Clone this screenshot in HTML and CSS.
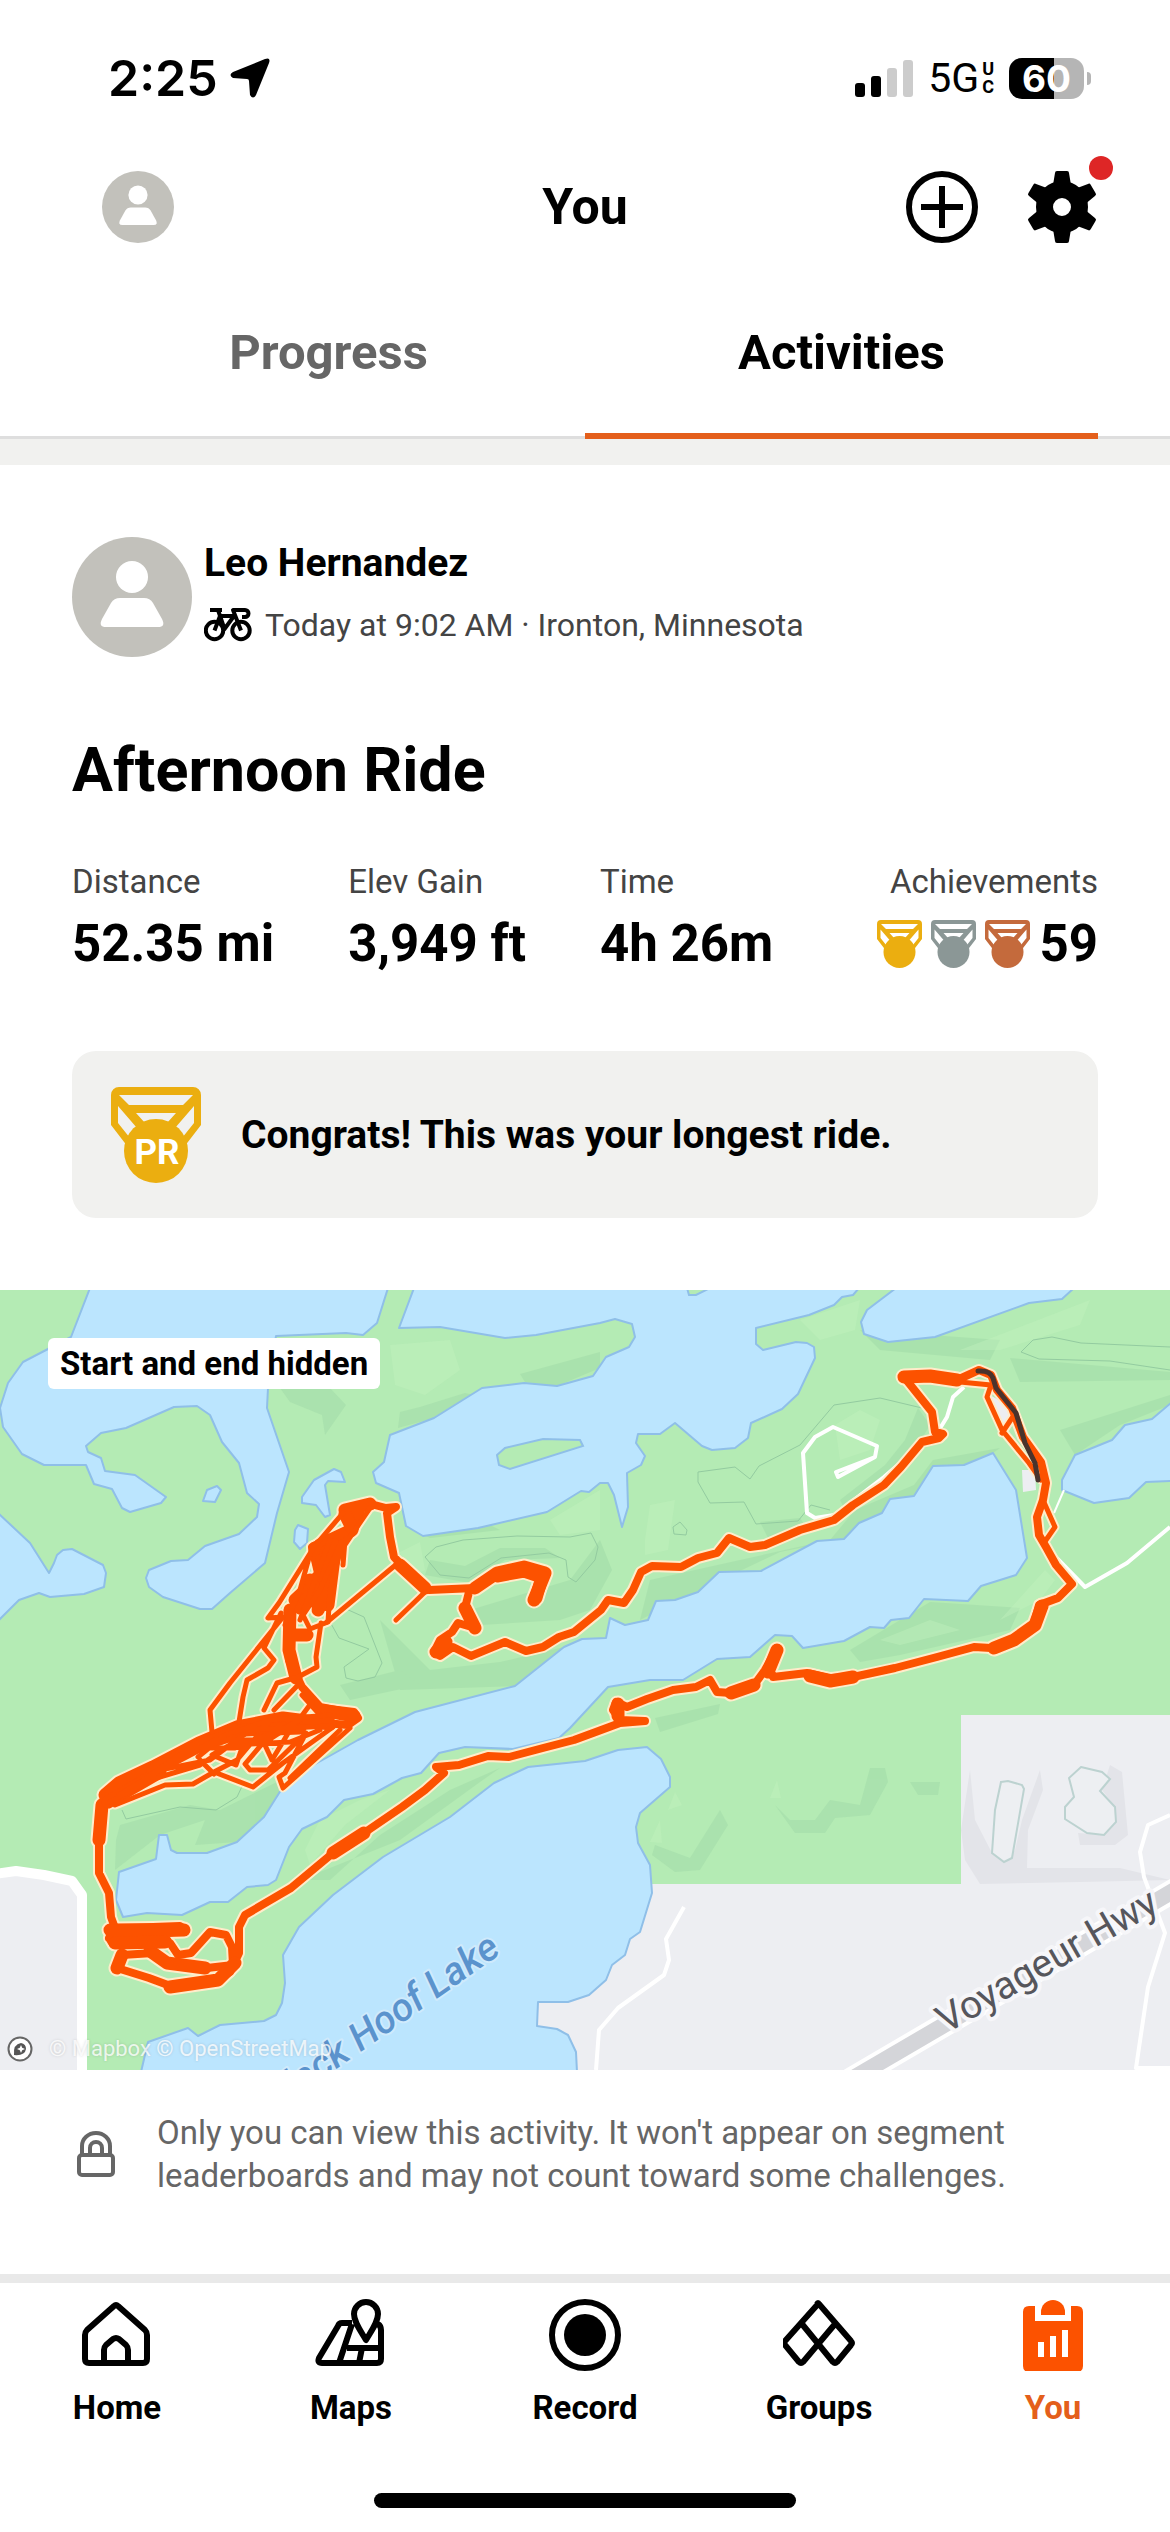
FILE: index.html
```html
<!DOCTYPE html>
<html lang="en">
<head>
  <meta charset="UTF-8" />
  <meta name="viewport" content="width=device-width, initial-scale=1.0"/>
  <title>You | Activities</title>
  <link rel="stylesheet" href="styles.css">
</head>
<body>

  <div class="status-bar">
    <div class="status-time">
      <span>2:25</span>
      <svg width="40" height="40" viewBox="0 0 40 40"><path d="M35 1Q41-1 39 5L26 37Q23 42 20 37L19 23Q19 21 17 21L3 20Q-2 17 3 14Z" /></svg>
    </div>
    <div class="status-icons">
      <svg class="signal" width="58" height="37" viewBox="0 0 58 37">
        <rect x="0" y="23" width="10" height="14" rx="3" />
        <rect x="16" y="16" width="10" height="21" rx="3" />
        <rect class="off" x="32" y="8" width="10" height="29" rx="3" />
        <rect class="off" x="48" y="0" width="10" height="37" rx="3" />
      </svg>
      <div class="network">5G<span class="network-type"><span>U</span><span>C</span></span></div>
      <div class="battery">60</div>
    </div>
  </div>

  <header class="header">
    <a href="#profile" class="header-avatar" aria-label="Profile">
      <svg width="72" height="72" viewBox="0 0 120 120"><circle class="avatar-bg" cx="60" cy="60" r="60" /><circle class="avatar-fg" cx="60" cy="40" r="16" /><path class="avatar-fg" d="M48 61h24q6 0 9 5l9 16q4 8-4 8H34q-8 0-4-8l9-16q3-5 9-5z" /></svg>
    </a>
    <h1>You</h1>
    <div class="header-actions">
      <button aria-label="Add">
        <svg width="72" height="72" viewBox="0 0 72 72"><circle cx="36" cy="36" r="33" fill="none" stroke="#000" stroke-width="6" /><path d="M15 36H57M36 15V57" stroke="#000" stroke-width="6" /></svg>
      </button>
      <button class="settings" aria-label="Settings">
        <svg width="72" height="72" viewBox="-36 -36 72 72">
          <defs><path id="tooth" d="M-5-36H5Q7-36 7-34L9-22H-9L-7-34Q-7-36-5-36Z" /></defs>
          <circle r="17.500" fill="none" stroke="#000" stroke-width="17" />
          <use href="#tooth" />
          <use href="#tooth" transform="rotate(60)" />
          <use href="#tooth" transform="rotate(120)" />
          <use href="#tooth" transform="rotate(180)" />
          <use href="#tooth" transform="rotate(240)" />
          <use href="#tooth" transform="rotate(300)" />
        </svg>
        <span class="dot"></span>
      </button>
    </div>
  </header>

  <nav class="tabs">
    <a href="#progress">Progress</a>
    <a href="#activities" class="active">Activities</a>
  </nav>

  <main>
    <div class="activity">
      <div class="athlete">
        <svg width="120" height="120" viewBox="0 0 120 120"><circle class="avatar-bg" cx="60" cy="60" r="60" /><circle class="avatar-fg" cx="60" cy="40" r="16" /><path class="avatar-fg" d="M48 61h24q6 0 9 5l9 16q4 8-4 8H34q-8 0-4-8l9-16q3-5 9-5z" /></svg>
        <div>
          <div class="name">Leo Hernandez</div>
          <div class="meta">
            <svg width="48" height="34" viewBox="0 0 48 34" fill="none" stroke="#000" stroke-width="4" stroke-linejoin="round"><circle cx="10.500" cy="22.500" r="8.700" /><circle cx="37" cy="22.500" r="8.700" /><path d="M6 2H18M14 2l6.500 19L30 8H16L10.500 22.500M37 22.500 29 2H41a3.500 3.500 0 0 1 0 7h-3" /></svg>
            <span>Today at 9:02 AM · Ironton, Minnesota</span>
          </div>
        </div>
      </div>

      <h2>Afternoon Ride</h2>

      <div class="stats">
        <div>
          <div class="stat-label">Distance</div>
          <div class="stat-value">52.35 mi</div>
        </div>
        <div>
          <div class="stat-label">Elev Gain</div>
          <div class="stat-value">3,949 ft</div>
        </div>
        <div>
          <div class="stat-label">Time</div>
          <div class="stat-value">4h 26m</div>
        </div>
        <div class="achievements">
          <div class="stat-label">Achievements</div>
          <div class="stat-value">
            <svg class="gold" width="45" height="48" viewBox="0 0 90 96"><use href="#medal" /></svg>
            <svg class="silver" width="45" height="48" viewBox="0 0 90 96"><use href="#medal" /></svg>
            <svg class="bronze" width="45" height="48" viewBox="0 0 90 96"><use href="#medal" /></svg>
            <span>59</span>
          </div>
        </div>
      </div>

      <div class="congrats">
        <svg class="gold" width="90" height="96" viewBox="0 0 90 96">
          <defs>
            <g id="medal">
              <path fill-rule="evenodd" d="M8 0H82a8 8 0 0 1 8 8V38L70 64H20L0 38V8a8 8 0 0 1 8-8ZM8 8 18 18H72L82 8ZM25 26 34 36H56L65 26ZM7 19 26 41 19 51 7 36ZM83 19 64 41 71 51 83 36Z" />
              <circle cx="45" cy="64" r="32" />
            </g>
          </defs>
          <use href="#medal" />
          <text class="pr" x="46" y="77">PR</text>
        </svg>
        <p>Congrats! This was your longest ride.</p>
      </div>
    </div>

    <div class="map">
      <svg class="map-canvas" viewBox="0 0 1170 780" preserveAspectRatio="xMidYMid slice">
        <rect class="land" width="1170" height="780" />

        <!-- hill shading -->
        <g class="shade">
          <path d="M400 122 420 117 465 103 478 106 434 128 398 138ZM520 84 600 62 600 78 557 96 525 92ZM280 98 330 98 346 115 325 145 322 125 290 112ZM390 150 400 205 420 240 470 225 500 240 430 248 405 236 399 203 378 192Z" />
          <path d="M425 285 470 293 505 270 560 268 545 258 500 258 465 276 430 270ZM570 290 600 250 612 280 590 320 560 330 480 335 470 320ZM380 330 400 400 515 396 564 357 500 372 430 380Z" />
          <path d="M120 535 190 515 220 520 281 490 281 500 264 527 237 552 195 555 205 530 160 545 115 580 116 550ZM340 395 400 380 420 395 350 410Z" />
          <path d="M1010 68 1170 82 1170 90 1020 92ZM918 118 930 135 915 160 880 190 845 220 840 210 885 175 905 150ZM855 220 914 195 933 170 1000 158 993 163 964 175 933 176 914 206 882 223 844 249 780 262 700 300 640 330 650 290 740 270 830 250Z" />
          <path d="M760 232 800 228 808 240 770 252ZM930 312 1020 318 1010 340 900 365 860 372 850 360ZM1060 140 1170 105 1170 115 1120 135 1075 165ZM860 40 1000 50 990 70 880 60Z" />
          <path d="M655 555 690 568 720 520 728 535 700 580 675 582 652 565ZM775 515 790 530 815 530 830 510 860 515 870 478 885 478 888 492 870 525 835 528 825 543 795 543ZM910 492 940 492 938 505 918 505ZM655 428 720 414 718 424 660 442ZM300 590 330 590 380 545 450 500 500 478 480 492 400 550Z" />
        </g>
        <g class="light">
          <path d="M390 55 450 50 460 80 425 105 395 95ZM400 262 420 252 425 280 405 290ZM550 230 600 200 600 240 560 245ZM645 250 650 215 675 210 668 260 645 265ZM835 135 860 120 880 130 870 160 840 170ZM960 60 1090 10 1080 35 1000 60ZM800 30 860 10 855 40 820 50Z" />
          <path d="M305 560 320 530 360 510 390 500 345 535 310 575ZM1000 330 1045 280 1055 290 1040 310ZM880 350 930 330 960 340 900 355ZM668 520 675 502 682 515ZM650 552 660 530 662 553ZM770 508 777 490 781 508Z" />
        </g>

        <!-- town blocks -->
        <path class="block" d="M640 594H961V425H1170V780H530V690Z" />
        <path class="block" d="M0 583 16 581 75 592 82 603V780H0Z" />
        <path class="block" d="M990 105 1012 118 1015 132 1002 142ZM1022 180 1035 180 1036 200 1023 202Z" />
        <path class="block-shade" d="M961 540 970 480 975 530 992 563 1004 572 1015 560 1022 530 1040 480 1043 500 1028 540 1027 578 1120 578 1170 590 1080 592 980 594 965 570ZM1110 475 1122 482 1128 545 1115 555 1080 555 1078 543 1104 545 1116 532 1115 517 1102 500Z" />

        <!-- lakes -->
        <g class="water">
          <path d="M90-2 71 47 23 72 8 93 0 118 3 137 22 164 44 175H86L94 194 112 199 122 218 130 222 161 213 166 207 135 185 105 181 101 168 88 162 86 156 101 143 126 138 174 117 197 116 210 125 222 152 239 173 247 203 259 214 257 227 239 244 205 256 188 270 171 271 149 280 146 288 149 297 163 307 200 319 212 319 230 303 265 273 277 223 289 182 267 118 268 98 276 46 346 43 363 45 377 33 388-2Z" />
          <path d="M-2 223 30 253 49 283 54 273 57 265 63 260 72 259 103 275 106 283 104 297 84 304 50 307 39 303 19 310-2 331Z" />
          <path d="M203 211 207 200 217 196 221 200 215 212ZM302 207 314 190 334 179 341 182 345 192 328 191 325 195 330 225 325 227 316 215 302 213ZM298 235 308 239 307 253 300 259 294 252 295 240Z" />
          <path d="M414-2 399 38 440 37 505 48 536 45 600 33 615 29 632 34 635 47 629 57 606 67 593 86 557 96 524 93 482 98 434 128 390 145 384 172 373 182 376 193 399 203 406 236 423 246 478 238 547 222 581 201 589 202 600 193 608 193 614 205 622 237 628 217 627 183 641 175 645 166 636 153 638 144 660 144 675 133 702 156 712 160 735 158 748 148 751 133 782 119 798 104 815 68 814 57 807 53 796 52 763 60 756 54V38L809 25 834 15 842 7 853 5 859-2Z" />
          <path d="M896-2 867 20 861 32 864 44 888 52 935 47 1029 13 1062 9 1074-2ZM1172 112 1152 129 1125 135 1112 150 1075 165 1062 190V200L1094 213 1129 208 1146 192 1172 191Z" />
          <path d="M993 163 1016 200 1027 268 1016 285 981 296 968 311 924 309 909 328 891 330 884 338 870 337 844 351 803 358 792 346 775 345 750 367 717 369 683 390H650L608 397 570 438 559 448 513 459 465 457 439 463 421 483 402 488 373 504 344 510 327 527 302 539 289 557 276 590 268 595 247 597 228 612H210L182 625 147 623 123 627 116 610 119 582 156 569 159 545H167L171 560 177 563H207L237 552 264 527 281 500 310 477 358 450 415 422 515 396 564 357 582 349 606 348 610 328 625 335 648 330 656 311 675 310 698 302 719 282 761 281 817 251 844 249 859 233 882 223 890 209 914 206 933 176 964 175Z" />
          <path d="M585 471 618 460 647 457 661 469 670 487V497L640 523 636 537 638 553 650 575 652 603 640 642 630 649 625 665 612 675 606 690 589 705 568 712H538L537 736 557 739 568 745 576 762 577 782H141L148 752 188 738 198 746 220 735 264 731 276 725 282 713 285 693 283 665 299 637 333 605 383 567 450 527 494 493 528 477Z" />
        </g>
        <g class="island">
          <path d="M497 165 505 158 543 149 580 150 583 156 510 179 499 175ZM687-2 689 5 696 5 710-2Z" />
        </g>

        <!-- contours -->
        <g class="contour">
          <path d="M425 267 436 257 463 250 517 246 570 247 591 243 598 257 595 270 576 292 568 287 566 270 549 263 501 268 469 288 440 285Z" />
          <path d="M922 118 880 108 834 115 800 155 759 176 750 189 735 177 698 182V192L710 213 744 212 756 234 798 231 811 215 830 220" />
          <path d="M1170 57 1081 53 1052 47 1033 50 1021 62 1039 69 1110 71 1170 80" />
          <path d="M329 330 339 348 369 359 344 377 346 388 358 391 375 387 382 373 364 327 344 318" />
          <path d="M122 520 126 529 180 517 216 520 237 507 245 490M673 237 680 232 687 240 686 245 674 244Z" />
        </g>
        <g class="pit">
          <path d="M1001 492 1008 491 1022 495 1024 499 1012 568 1004 572 992 563 995 520ZM1081 477 1102 482 1110 489 1100 501 1115 517 1116 532 1104 545 1087 543 1065 529V517L1074 507 1069 488Z" />
        </g>

        <!-- roads -->
        <g class="road">
          <path class="road-wide" d="M-5 584 16 581 44 585 72 591 82 605V785" />
          <path d="M684 617 666 649 669 670 664 685 618 718 599 740 596 780M1170 525 1148 535 1140 562 1144 587 1165 643 1148 697 1136 778H1170" />
          <path d="M964 97 953 107 947 127 939 140M922 154 884 187 834 225 815 228 807 223 803 163 815 147 833 137 877 156 875 167 838 187 836 182 875 167M1046 257 1085 297 1127 273 1170 237" />
          <path class="road-thin" d="M1064 200 1054 223" />
        </g>
        <path class="highway-case" d="M850 790 1180 597" />
        <path class="highway" d="M850 790 1180 597" />

        <!-- the ride itself, drawn once as a halo and once in orange -->
        <defs>
          <g id="route">
            <path class="line" d="M475 338 458 333 452 342 440 350 434 362 440 366 453 357 471 366 505 352 526 361 543 357 559 347 574 342 601 320 608 310 624 313 633 300 641 282 652 276 681 277 698 268 717 263 729 248 750 257 765 255 800 240 834 230 853 215 884 195 901 177 922 152 939 148 943 144 935 142 932 122 916 102 904 87 930 85 957 90 979 80 991 85 997 100 1012 118 1023 147 1041 172 1046 193 1043 210 1037 227 1039 245 1046 257 1056 275 1072 294 1058 308 1039 315 1033 337 1014 350 991 358 974 357 937 367 895 378 853 387 830 388 807 383 773 387 769 377 777 358 765 380 754 395 731 403 717 402 710 390 696 397 673 400 647 409 627 417 616 412 613 420 620 430 645 431 620 433 593 443 574 450 543 458 509 467 488 466 459 475 436 477 444 483 425 500 402 517 364 543 333 563 291 598 245 625 239 637V663L230 682 218 690 176 698 149 688 117 678 122 665 153 663 165 673 207 678 233 675 232 657 226 645 210 642 201 652 191 663 178 665 170 653 130 653 109 648 153 645 186 640 180 636 153 637 115 638 111 627 109 603 99 583V550L101 513 119 493 153 477 199 453 237 435 283 427 325 433 348 435 358 428 354 422 321 418 302 397 289 370 287 343 295 310 318 283 312 257 329 248 352 243 360 223 344 220 367 213 386 218 396 217 387 223 390 247 394 267 409 283 429 300 475 298 469 302 465 318 475 338" />
            <path class="line-thick" d="M475 298 497 283 524 277 545 283 534 310M400 275 425 298M475 338 465 318M436 362 446 352M904 87 930 86 957 90M1042 316 1035 335 1014 350 994 358M777 360 768 382M810 386 830 391 853 387M754 395 731 403M618 414V426M105 505 119 493 153 477 199 453 237 437 283 428 330 434M354 426 322 420M345 220 370 214M320 255 352 240 356 224M307 345 290 345M290 320 289 360 296 388M295 310 322 285 315 258M99 550 102 515M113 650 165 651M110 640 150 640M117 678 122 665M170 697 218 690 235 673M150 661 167 673 205 678M333 563 364 543M184 640 150 641" />
            <path class="line-thick" d="M497 286 524 281 542 287 536 308M326 262 332 280 322 312M334 268 328 315M308 300 300 318M115 653 165 652M345 224 352 238M153 480 199 456 245 440 300 438M108 512 160 482" />
            <path class="line-thick" d="M322 270 328 300 318 320M305 310 322 312 310 290M325 282 334 255" />
            <path class="line-thin" d="M425 302 396 330M398 273 327 332M960 92 991 95 987 107 1002 140 1029 173 1041 190M1012 128 1002 143M1043 210 1055 237 1046 250" />
            <path class="line-thin" d="M343 223 314 257 279 313 268 328 283 327 230 393 210 420 212 442M281 323 264 358 274 370 268 378 247 390 243 407 239 432M321 333 316 367 317 377 298 387 277 393 264 420M298 395 274 420M370 218 340 262 330 300 328 332 310 339 303 325 320 300 341 252M312 257 300 300 285 335M330 250 300 330M302 405 320 425M312 412 295 435M345 250 343 275" />
            <path class="line-thin" d="M115 515 165 495 193 494 214 482 253 497 283 473 333 437M350 438 283 498 279 487 285 483 306 443 268 480 250 480 245 474 268 447M340 440 290 488M272 470 264 453 295 433M214 482 237 470 268 433M272 470 290 440M119 505 160 480 210 470 250 440 330 436M110 512 150 490 200 475 230 455 290 452 320 440M150 485 190 458 235 458 280 440M170 475 215 450 260 450 300 430M200 470 214 484M198 467 225 445 270 430 330 425M230 455 212 465 236 475 243 455" />
          </g>
        </defs>
        <use href="#route" class="route-halo" />
        <use href="#route" class="route" />
        <path class="route-now" d="M978 81Q990 80 993 88L996 98 1016 123 1025 153 1035 173 1038 190" />

        <text class="lake-name" transform="translate(502 663) rotate(-35)">Black Hoof Lake</text>
        <text class="road-name" transform="translate(946 744) rotate(-30)">Voyageur Hwy</text>
      </svg>
      <div class="map-badge">Start and end hidden</div>
      <div class="map-credit">
        <svg width="26" height="26" viewBox="0 0 26 26"><circle cx="13" cy="13" r="11.500" fill="#fff" stroke="#666" stroke-width="2" /><path d="M7 19Q6 8 14 7a6 6 0 0 1 5 6Q18 20 7 19Z" fill="#555" /><path d="m14 9 1.200 2.800L18 13l-2.800 1.200L14 17l-1.200-2.800L10 13l2.800-1.200Z" fill="#fff" /></svg>
        <span>© Mapbox © OpenStreetMap</span>
      </div>
    </div>

    <div class="privacy">
      <svg width="38" height="46" viewBox="0 0 38 46" fill="none" stroke="#666" stroke-width="4"><rect x="2" y="24" width="34" height="20" rx="3" /><path d="M5 24V15a14 13 0 0 1 28 0v9M13 24v-7a6 6 0 0 1 12 0v7" /></svg>
      <p>Only you can view this activity. It won't appear on segment leaderboards and may not count toward some challenges.</p>
    </div>
  </main>

  <nav class="tab-bar">
    <a href="#home">
      <svg width="72" height="72" viewBox="0 0 72 72"><path d="M33 7q2-2 4 0L64 31q2 2 2 5V60q0 4-4 4H8q-4 0-4-4V36q0-3 2-5ZM23 64V51q0-3 2-5l7-6q3-2 6 0l7 6q2 2 2 5v13" /></svg>
      <span>Home</span>
    </a>
    <a href="#maps">
      <svg width="72" height="72" viewBox="0 0 72 72"><path d="M37 24H27q-3 0-4 3L4 59q-2 5 3 5H62q4 0 4-4V31q0-4-3-6M37 25 24 64M32 49H66M47 49 44 64M51 41C45 31 39 23 39 15a12 12 0 0 1 24 0c0 8-6 16-12 26z" /></svg>
      <span>Maps</span>
    </a>
    <a href="#record">
      <svg width="72" height="72" viewBox="0 0 72 72"><circle cx="36" cy="36" r="33" /><circle class="solid" cx="36" cy="36" r="21" /></svg>
      <span>Record</span>
    </a>
    <a href="#groups">
      <svg width="72" height="72" viewBox="0 0 72 72"><path d="M34 5q1-2 2 0L68 42q2 2 0 4L54 63q-2 2-4 0L19 25M35 5 2 42q-2 2 0 4L16 63q2 2 4 0L52 25" /></svg>
      <span>Groups</span>
    </a>
    <a href="#you" class="active">
      <svg width="72" height="72" viewBox="0 0 72 72"><path class="solid" fill-rule="evenodd" d="M12 7H18V22H54V7H60q6 0 6 6V67q0 6-6 6H12q-6 0-6-6V13q0-6 6-6ZM21 43V58H27V43ZM33 37V58H39V37ZM45 31V58H51V31Z" /><path class="solid" d="M24 16V13a12 12 0 0 1 24 0v3Z" /></svg>
      <span>You</span>
    </a>
  </nav>
  <div class="home-indicator"></div>

</body>
</html>
```
FILE: styles.css
```css
* {
  box-sizing: border-box;
}

body {
  margin: 0;
  background-color: #fff;
  color: #000;
  font-family: Roboto, "Liberation Sans", sans-serif;
}

svg {
  display: block;
  flex-shrink: 0;
}

a {
  color: inherit;
  text-decoration: none;
}

h1, h2, p {
  margin: 0;
}

button {
  padding: 0;
  border: none;
  background: none;
  cursor: pointer;
}

/* Status bar */
.status-bar {
  display: flex;
  justify-content: space-between;
  align-items: center;
  height: 156px;
  padding: 0 86px 0 108px;
  font-family: Inter, sans-serif;
}

.status-time {
  display: flex;
  align-items: center;
  gap: 12px;
  font-size: 50px;
  font-weight: 600;
}

.status-icons {
  display: flex;
  align-items: center;
  gap: 15px;
}

.signal .off {
  fill: #ccc;
}

.network {
  display: flex;
  align-items: center;
  gap: 3px;
  font-family: Roboto, sans-serif;
  font-size: 41px;
  font-weight: 400;
}

.network-type {
  display: flex;
  flex-direction: column;
  font-size: 18px;
  font-weight: 700;
  line-height: 18px;
}

.battery {
  position: relative;
  width: 75px;
  height: 41px;
  border-radius: 13px;
  background: linear-gradient(to right, #000 60%, #b5b5b5 60%);
  color: #fff;
  font-size: 37px;
  font-weight: 700;
  line-height: 41px;
  text-align: center;
}

.battery::after {
  content: "";
  position: absolute;
  top: 14px;
  right: -7px;
  width: 4px;
  height: 13px;
  border-radius: 0 4px 4px 0;
  background-color: #b5b5b5;
}

/* Header */
.header {
  display: grid;
  grid-template-columns: 1fr auto 1fr;
  align-items: center;
  height: 102px;
  padding: 0 72px 0 102px;
}

.header h1 {
  padding-right: 30px;
  font-size: 50px;
  font-weight: 700;
}

.header-actions {
  display: flex;
  justify-content: flex-end;
  gap: 48px;
}

.settings {
  position: relative;
}

.dot {
  position: absolute;
  top: -15px;
  right: -15px;
  width: 24px;
  height: 24px;
  border-radius: 50%;
  background-color: #de2626;
}

.avatar-bg {
  fill: #c2c1bb;
}

.avatar-fg {
  fill: #fff;
}

/* Tabs */
.tabs {
  display: flex;
  padding: 0 72px;
  border-bottom: 26px solid #f1f1ef;
  background: linear-gradient(to top, #dedede 3px, #fff 3px);
}

.tabs a {
  flex: 1;
  height: 181px;
  border-bottom: 6px solid transparent;
  color: #666;
  font-size: 49px;
  font-weight: 700;
  line-height: 189px;
  text-align: center;
}

.tabs .active {
  border-color: #e45f1b;
  color: #000;
}

/* Activity */
.activity {
  padding: 72px;
}

.athlete {
  display: flex;
  gap: 12px;
}

.name {
  padding-top: 3px;
  font-size: 39px;
  font-weight: 700;
  line-height: 46px;
}

.meta {
  display: flex;
  align-items: center;
  gap: 13px;
  margin-top: 16px;
  color: #444;
  font-size: 32px;
  line-height: 46px;
}

h2 {
  margin-top: 77px;
  font-size: 61px;
  font-weight: 700;
  line-height: 72px;
}

.stats {
  display: flex;
  gap: 74px;
  margin-top: 56px;
}

.stat-label {
  color: #444;
  font-size: 33px;
  line-height: 40px;
}

.stat-value {
  display: flex;
  gap: 9px;
  align-items: center;
  margin-top: 12px;
  font-size: 51px;
  font-weight: 700;
  line-height: 60px;
}

.achievements {
  margin-left: auto;
  text-align: right;
}

.gold {
  fill: #ebae10;
}

.silver {
  fill: #8b9796;
}

.bronze {
  fill: #c46a3c;
}

.congrats {
  display: flex;
  align-items: center;
  gap: 40px;
  margin-top: 77px;
  height: 167px;
  padding: 0 39px;
  border-radius: 24px;
  background-color: #f1f1ef;
  font-size: 39px;
  font-weight: 700;
}

.pr {
  fill: #fff;
  font-size: 35px;
  text-anchor: middle;
}

/* Map */
.map {
  position: relative;
}

.map-canvas {
  width: 100%;
}

.land {
  fill: #b4ebb4;
}

.shade {
  fill: #9bd5a4;
  opacity: 0.4;
}

.light {
  fill: #c4f3bf;
  opacity: 0.4;
}

.block {
  fill: #edeef2;
}

.block-shade {
  fill: #e3e4e9;
}

.water {
  fill: #bbe5fe;
  stroke: #8fbfe8;
  stroke-width: 2;
  stroke-linejoin: round;
}

.island {
  fill: #b4ebb4;
  stroke: #8fbfe8;
  stroke-width: 2;
}

.contour {
  fill: none;
  stroke: #93cba0;
  stroke-width: 1;
}

.pit {
  fill: #edeff2;
  stroke: #bcd2d0;
  stroke-width: 2;
}

.road {
  fill: none;
  stroke: #fff;
  stroke-width: 4;
  stroke-linejoin: round;
}

.road-wide {
  stroke-width: 10;
}

.road-thin {
  stroke-width: 2;
}

.highway-case {
  stroke: #fff;
  stroke-width: 24;
}

.highway {
  stroke: #d4d5d9;
  stroke-width: 16;
}

.route-halo,
.route,
.route-now {
  fill: none;
  stroke-linecap: round;
  stroke-linejoin: round;
}

.route-halo {
  --halo: 4px;
  stroke: #ffeccb;
}

.route {
  --halo: 0px;
  stroke: #fc5200;
}

.line {
  stroke-width: calc(8px + var(--halo));
}

.line-thick {
  stroke-width: calc(13px + var(--halo));
}

.line-thin {
  stroke-width: calc(5px + var(--halo));
}

.route-now {
  stroke: #4a332c;
  stroke-width: 5;
}

.lake-name,
.road-name {
  font-size: 39px;
  paint-order: stroke;
  stroke-linejoin: round;
}

.lake-name {
  fill: #5b93cd;
  stroke: #cfeafc;
  stroke-width: 4;
  font-style: italic;
  font-weight: 500;
  text-anchor: end;
}

.road-name {
  fill: #56565c;
  stroke: #f6f6f9;
  stroke-width: 8;
}

.map-badge {
  position: absolute;
  top: 48px;
  left: 48px;
  padding: 0 12px;
  border-radius: 6px;
  background-color: #fff;
  font-size: 33px;
  font-weight: 700;
  line-height: 51px;
}

.map-credit {
  position: absolute;
  bottom: 6px;
  left: 7px;
  display: flex;
  align-items: center;
  gap: 16px;
  color: rgba(255, 255, 255, 0.8);
  font-size: 22px;
  line-height: 30px;
  text-shadow: 0 0 3px rgba(0, 0, 0, 0.15);
}

/* Privacy note */
.privacy {
  display: flex;
  align-items: center;
  gap: 42px;
  padding: 41px 150px 77px 77px;
  color: #666;
  font-size: 33px;
  line-height: 43px;
}

/* Bottom tab bar */
.tab-bar {
  display: flex;
  border-top: 9px solid #e9e9e9;
}

.tab-bar a {
  display: flex;
  flex: 1;
  flex-direction: column;
  align-items: center;
  gap: 17px;
  padding-top: 16px;
  font-size: 33px;
  font-weight: 700;
  line-height: 40px;
}

.tab-bar svg {
  fill: none;
  stroke: #000;
  stroke-width: 6;
  stroke-linejoin: round;
}

.tab-bar .solid {
  fill: #000;
  stroke: none;
}

.tab-bar .active {
  color: #e45f1b;
}

.tab-bar .active .solid {
  fill: #fc5200;
}

.home-indicator {
  width: 36%;
  height: 15px;
  margin: 65px auto 24px;
  border-radius: 8px;
  background-color: #000;
}
```
